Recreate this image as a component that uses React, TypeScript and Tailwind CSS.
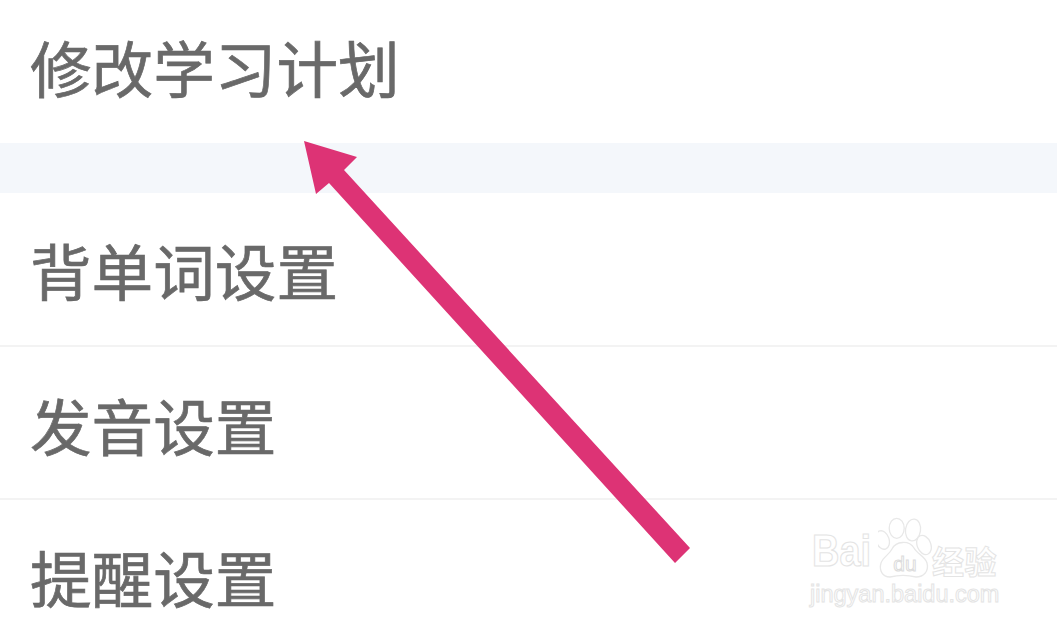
export default function App() {
  const font = "font-['Noto_Sans_CJK_SC','Noto_Sans_CJK_JP',sans-serif]";
  const latin = "font-['Liberation_Sans',sans-serif]";
  return (
    <div className={`relative w-[1057px] h-[631px] overflow-hidden bg-white ${font} text-[61.6px] leading-none font-normal [-webkit-text-stroke:0.7px_#696969] text-[#696969]`}>
      <div className="h-[143px] pl-[30px] pb-[10px] flex items-center">修改学习计划</div>
      <div className="h-[50px] bg-[#f4f7fb]" />
      <div className="h-[154px] pl-[30px] pt-[2px] flex items-center border-b-2 border-[#f3f3f3]">背单词设置</div>
      <div className="h-[153px] pl-[30px] pt-[4px] flex items-center border-b-2 border-[#f3f3f3]">发音设置</div>
      <div className="h-[131px] pl-[30px] pt-[23px] flex items-center">提醒设置</div>

      <svg className="absolute left-0 top-0" width="1057" height="631" viewBox="0 0 1057 631">
        <polygon points="304,141 357,157 344,170 690,548 675,563 329,183 316,194" fill="#dd3375" />
      </svg>

      <div className="absolute left-[810px] top-[516px] w-[200px] flex flex-col">
        <div className="h-[62px] flex items-end">
          <div className={`w-[68px] h-[45px] pl-[2px] ${latin} text-[38px] leading-[45px] font-bold text-white [-webkit-text-stroke:1px_#e4e4e4] whitespace-nowrap origin-bottom scale-y-[1.18]`}>Bai</div>
          <div className="relative w-[54px] h-[62px] flex items-end justify-center pb-[4px]">
            <svg className="absolute left-0 top-0" width="54" height="62" viewBox="0 0 54 62" fill="white" stroke="#e8e8e8" strokeWidth="1.3">
              <ellipse cx="18.7" cy="12.3" rx="7.5" ry="10" />
              <ellipse cx="35" cy="14" rx="7.5" ry="11" transform="rotate(8 35 14)" />
              <ellipse cx="4.6" cy="24" rx="6.5" ry="9.5" transform="rotate(-18 4.6 24)" />
              <ellipse cx="46" cy="29" rx="6.8" ry="10" transform="rotate(-22 46 29)" />
              <path d="M12 61 C4 61 1 54 3 47 C5 41 11 39 14 33 C18 25 31 24 36 32 C39 38 47 40 49 47 C51 55 46 61 38 61 C30 59 20 59 12 61 Z" />
            </svg>
            <span className={`relative ${latin} text-[21px] leading-none font-normal text-white [-webkit-text-stroke:1px_#dcdcdc]`}>du</span>
          </div>
          <div className="w-[70px] h-[36px] text-[32px] leading-[36px] font-bold tracking-[0.5px] text-white [-webkit-text-stroke:1px_#e4e4e4] whitespace-nowrap">经验</div>
        </div>
        <div className={`mt-[5px] ${latin} text-[23.5px] leading-none font-normal text-white [-webkit-text-stroke:1px_#e4e4e4] whitespace-nowrap`}>jingyan.baidu.com</div>
      </div>
    </div>
  );
}
